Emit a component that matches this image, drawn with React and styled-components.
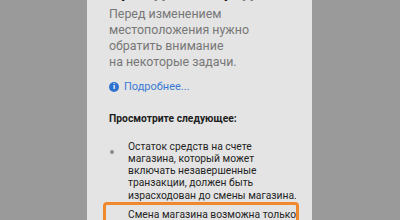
import React from 'react';
import styled, { createGlobalStyle } from 'styled-components';

const GlobalStyle = createGlobalStyle`
  html, body {
    margin: 0;
    padding: 0;
    background: #9a9a9a;
    font-family: Roboto, "Liberation Sans", sans-serif;
    -webkit-font-smoothing: antialiased;
  }
`;

const Page = styled.div`
  width: 400px;
  height: 220px;
  overflow: hidden;
  display: flex;
  justify-content: center;
  background: #9a9a9a;
`;

const Sheet = styled.div`
  width: 225px;
  height: 220px;
  margin-left: -1px;
  box-sizing: border-box;
  padding: 0 18px 0 22px;
  background: #e4e4e4;
  overflow: hidden;
`;

const Title = styled.h2`
  margin: -18px 0 4px;
  font-size: 17px;
  line-height: 20px;
  font-weight: 700;
  color: #1d1d1d;
  white-space: nowrap;
`;

const Lead = styled.p`
  margin: 0;
  font-size: 12.4px;
  line-height: 16px;
  color: #777;
`;

const MoreLink = styled.a`
  display: flex;
  align-items: center;
  gap: 5px;
  margin-top: 9px;
  font-size: 11px;
  line-height: 16px;
  color: #3a7bd5;
  text-decoration: none;
`;

const InfoDot = styled.span`
  width: 10px;
  height: 10px;
  border-radius: 50%;
  background: #2f72d0;
  color: #fff;
  font-size: 8px;
  font-weight: 700;
  line-height: 10px;
  text-align: center;
  flex-shrink: 0;
`;

const Subhead = styled.h3`
  margin: 16px 0 0;
  font-size: 10.3px;
  line-height: 16px;
  font-weight: 700;
  color: #1d1d1d;
`;

const List = styled.ul`
  list-style: none;
  margin: 13.5px 0 0;
  padding: 0;
`;

const Item = styled.li`
  display: flex;
  gap: 14px;
  margin: ${p => (p.$marked ? '0 -5px 0 -6px' : '0')};
  padding: ${p => (p.$marked ? '4px 2px 0 3px' : '0')};
  border: ${p => (p.$marked ? '3px solid #f0882c' : 'none')};
  border-radius: 4px;
  font-size: 10.3px;
  line-height: 12.3px;
  color: #242424;
  white-space: nowrap;
`;

const Bullet = styled.span`
  width: 4px;
  height: 4px;
  margin: ${p => (p.$low ? '13px' : '9.5px')} 0 0 1px;
  border-radius: 50%;
  background: #8a8a8a;
  flex-shrink: 0;
`;

const ItemText = styled.span`
  flex: 1;
`;

const items = [
  {
    lines: [
      'Остаток средств на счете',
      'магазина, который может',
      'включать незавершенные',
      'транзакции, должен быть',
      'израсходован до смены магазина.',
    ],
  },
  {
    marked: true,
    lines: ['Смена магазина возможна только', 'после отмены подписок.'],
  },
];

export default function App() {
  return (
    <>
      <GlobalStyle />
      <Page>
        <Sheet>
          <Title>Прежде чем продолжить</Title>
          <Lead>
            Перед изменением
            <br />
            местоположения нужно
            <br />
            обратить внимание
            <br />
            на некоторые задачи.
          </Lead>
          <MoreLink href="#">
            <InfoDot>i</InfoDot>
            Подробнее...
          </MoreLink>
          <Subhead>Просмотрите следующее:</Subhead>
          <List>
            {items.map((item, i) => (
              <Item key={i} $marked={item.marked}>
                <Bullet $low={item.marked} />
                <ItemText>
                  {item.lines.map((l, j) => (
                    <React.Fragment key={j}>
                      {l}
                      <br />
                    </React.Fragment>
                  ))}
                </ItemText>
              </Item>
            ))}
          </List>
        </Sheet>
      </Page>
    </>
  );
}
